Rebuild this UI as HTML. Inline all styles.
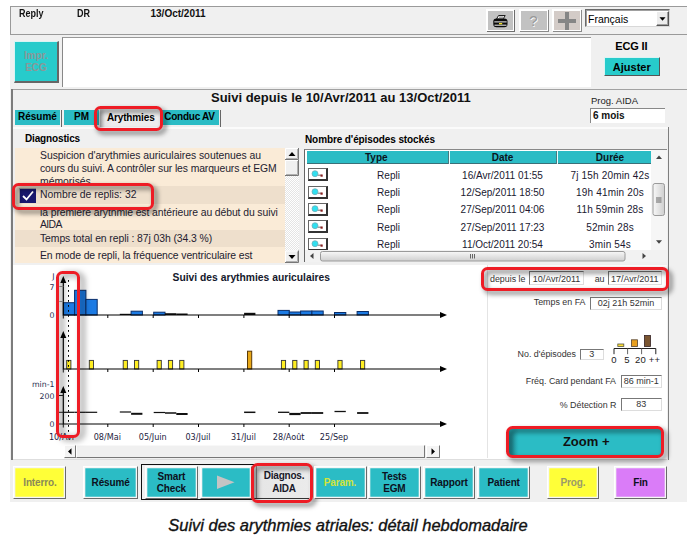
<!DOCTYPE html>
<html><head><meta charset="utf-8"><title>Suivi des arythmies atriales</title>
<style>
html,body{margin:0;padding:0;background:#fff}
#root{position:relative;width:698px;height:545px;overflow:hidden;background:#fff;font-family:"Liberation Sans",sans-serif;font-size:10px;color:#111}
#root div,#root span{position:absolute;box-sizing:border-box;white-space:nowrap}
#root svg{position:absolute}
.b{font-weight:bold}
.btn{background:#2bbcc5;border-top:1px solid #d8f4f4;border-left:1px solid #d8f4f4;border-right:1px solid #555;border-bottom:1px solid #555;font-weight:bold;text-align:center;color:#101020}
.btn span{left:0;right:0;text-align:center}
.fld{background:#fff;border-top:1px solid #777;border-left:1px solid #777;border-right:1px solid #ddd;border-bottom:1px solid #ddd;text-align:center;font-size:9px;color:#333}
.lbl{font-size:9px;color:#333;text-align:right}
.red{border:3px solid #ee1c25;border-radius:6.500px;filter:drop-shadow(3px 3px 2.500px rgba(0,0,0,.6))}
.tab{background:#2bbcc5;font-weight:bold;text-align:center;line-height:14.500px;font-size:10px;color:#000}
.row{left:0;width:270px}
.row span{left:25px;font-size:10.4px;color:#241c30}
.tr{left:0;width:347px;height:17px;font-size:10px;color:#201830}
.tr span{text-align:center;line-height:17px}
.ic{left:3px;top:1.500px;width:19.500px;height:13px;background:#fff;border:1px solid #666;border-right:2px solid #333;border-bottom:2px solid #333}
.bb{border:1px solid;border-color:#fff #6a6a6a #6a6a6a #fff;box-shadow:inset 0 0 0 1.300px #f6f6f6;font-weight:bold;text-align:center;font-size:10px;letter-spacing:-.15px;line-height:12px}
.bb span{left:0;right:0;text-align:center}
.tb{border:1px solid #fff;border-right-color:#666;border-bottom-color:#666}
</style></head><body>
<div id="root">

<div style="left:10px;top:6px;width:677px;height:496px;background:#f0f0f0"></div>
<div style="left:10px;top:6px;width:677px;height:29px;border:1px solid #9a9a9a;border-right:none"></div>
<span class="b" style="left:18.500px;top:8px;transform:scaleX(.9);transform-origin:0 0">Reply</span>
<span class="b" style="left:76.500px;top:8px;transform:scaleX(.9);transform-origin:0 0">DR</span>
<span class="b" style="left:150.500px;top:8px">13/Oct/2011</span>
<div style="left:485.800px;top:9px;width:28.200px;height:22.200px;background:#c2c2c2;border:2.300px solid #fff;border-right-width:1.300px;border-bottom-width:1.300px;box-shadow:1px 1px 0 #6e6e6e"></div>
<svg style="left:493px;top:14.800px" width="15" height="13" viewBox="0 0 15 13"><rect x=".3" y="3.400" width="14.200" height="8.800" rx="3.200" fill="#0a0a0a"/><path d="M5.600 .5h6.600l-1.900 3.300h-6.700z" fill="#fff" stroke="#0a0a0a" stroke-width=".9"/><path d="M6 2.100h4.500" stroke="#333" stroke-width=".7"/><path d="M1.300 6.900h12.400M1.500 10.200h12" stroke="#f4f4f4" stroke-width="1"/><rect x="6" y="8" width="3.200" height="1.300" fill="#f0e020"/></svg>
<div style="left:518.600px;top:9px;width:29.200px;height:22.200px;background:#c2c2c2;border:2.300px solid #fff;border-right-width:1.300px;border-bottom-width:1.300px;box-shadow:1px 1px 0 #8a8a8a"></div>
<span style="left:518.800px;top:12.500px;width:29px;text-align:center;font-size:15px;line-height:16px;color:#989898;text-shadow:.8px .8px 0 #fafafa">?</span>
<div style="left:552px;top:9px;width:29.300px;height:22.200px;background:#d3cbc7;border:2.300px solid #fff;border-right-width:1.300px;border-bottom-width:1.300px;box-shadow:1px 1px 0 #8a8a8a"></div>
<div style="left:558.200px;top:18.600px;width:17.800px;height:4px;background:#868686"></div>
<div style="left:565px;top:11.700px;width:4.400px;height:18px;background:#868686"></div>
<div style="left:584.800px;top:9.300px;width:85.200px;height:18.200px;background:#fff;border:1px solid #6a6a6a;border-right-color:#d8d8d8;border-bottom-color:#d8d8d8;box-shadow:inset 1px 1px 0 #a0a0a0"></div>
<span style="left:588px;top:12.500px;font-size:10.500px;color:#000">Français</span>
<div class="tb" style="left:656px;top:11.300px;width:13px;height:15.200px;background:#ececec;border-right-color:#555;border-bottom-color:#555;box-shadow:inset -1px -1px 0 #a0a0a0"></div>
<svg style="left:656px;top:11.300px" width="14" height="16"><path d="M3.500 6.200h6l-3 3.500z" fill="#000"/></svg>
<div class="btn" style="left:14px;top:40.800px;width:45px;height:42.500px;background:#27cbcb;border-right:2px solid #666;border-bottom:2px solid #666;color:#8a9898;font-size:10px;line-height:12px;padding-top:8px">Impr.<br>ECG</div>
<div style="left:62px;top:37px;width:528.500px;height:50px;background:#fff;border-top:1px solid #999;border-left:1px solid #888"></div>
<span class="b" style="left:601.300px;top:39.800px;width:60px;text-align:center;font-size:11px;letter-spacing:-.15px;color:#000">ECG II</span>
<div class="btn" style="left:603.500px;top:56.600px;width:56.500px;height:19.800px;background:#27cbcb;font-size:11px;line-height:18.500px;color:#000">Ajuster</div>
<div style="left:11px;top:88.500px;width:676px;height:1.500px;background:#a2a2a2"></div>
<div style="left:10.500px;top:89px;width:2px;height:371px;background:#7c7c7c"></div>
<span class="b" style="left:211px;top:90px;font-size:13px;color:#111">Suivi depuis le 10/Avr/2011 au 13/Oct/2011</span>
<span style="left:591px;top:95px;font-size:9.5px;color:#222">Prog. AIDA</span>
<div style="left:590px;top:108px;width:75px;height:15px;background:#fff;border-top:1px solid #888;border-left:1px solid #888"></div>
<span class="b" style="left:593px;top:110px;font-size:10px">6 mois</span>
<div class="tab" style="left:14.800px;top:110px;width:45.200px;height:15px">Résumé</div>
<div style="left:60.700px;top:109.500px;width:1.500px;height:17px;background:#666"></div>
<div class="tab" style="left:63.800px;top:110px;width:35.500px;height:15px">PM</div>
<div class="tab" style="left:99.500px;top:108.500px;width:62.500px;height:19px;background:linear-gradient(90deg,#bdbdbd 0,#e6e6e6 5px,#ededed 12px);line-height:17.500px;letter-spacing:-.13px">Arythmies</div>
<div class="tab" style="left:162px;top:110px;width:57px;height:15px;font-size:10px;letter-spacing:-.25px;padding-right:2px">Conduc AV</div>
<div style="left:219.500px;top:109.500px;width:1.500px;height:17px;background:#666"></div>
<div style="left:13px;top:127px;width:655px;height:1.500px;background:#fbfbfb"></div>
<div style="left:667.600px;top:127px;width:1.800px;height:332.500px;background:#7e7e7e"></div>
<div class="red" style="left:94px;top:106px;width:69px;height:25px"></div>
<span class="b" style="left:25px;top:133px;font-size:10px;letter-spacing:-.15px;color:#000">Diagnostics</span>
<span class="b" style="left:305px;top:133.500px;font-size:10px;letter-spacing:-.1px;color:#000">Nombre d'épisodes stockés</span>
<div id="diag" style="left:15px;top:148px;width:284px;height:115px;overflow:hidden;background:#faebd7">
<div class="row" style="top:0;height:38px;background:#faebd7"><span style="top:2px;letter-spacing:-.02px">Suspicion d'arythmies auriculaires soutenues au</span><span style="top:14.800px;letter-spacing:-.115px">cours du suivi. A contrôler sur les marqueurs et EGM</span><span style="top:27.500px">mémorisés</span></div>
<div class="row" style="top:38px;height:18px;background:#eedfcc"><span style="top:3px">Nombre de replis: 32</span></div>
<div class="row" style="top:56px;height:26px;background:#faebd7"><span style="top:2.500px;letter-spacing:-.092px">la première arythmie est antérieure au début du suivi</span><span style="top:14.700px;letter-spacing:-.6px">AIDA</span></div>
<div class="row" style="top:82px;height:16.500px;background:#eedfcc"><span style="top:3px;letter-spacing:-.074px">Temps total en repli : 87j 03h (34.3 %)</span></div>
<div class="row" style="top:98.500px;height:30px;background:#faebd7"><span style="top:3.700px;letter-spacing:-.1px">En mode de repli, la fréquence ventriculaire est</span></div>
<div style="left:270px;top:0;width:14px;height:115px;background:#f4f4f4"><svg style="left:0;top:0" width="14" height="115"><defs><pattern id="dot" width="2" height="2" patternUnits="userSpaceOnUse"><rect width="2" height="2" fill="#fff"/><rect width="1" height="1" fill="#e4e4e4"/><rect x="1" y="1" width="1" height="1" fill="#e4e4e4"/></pattern></defs><rect width="14" height="115" fill="url(#dot)"/><g id="sbb"><rect width="14" height="12" fill="#f0f0f0"/><path d="M.5 12V.5H14" stroke="#fff" fill="none"/><path d="M13.500 0V11.500H0" stroke="#777" fill="none"/><path d="M12.500 1V10.500H1" stroke="#b0b0b0" fill="none"/></g><path d="M3.500 8l3.500-4 3.500 4z" fill="#000"/><g transform="translate(0,12)"><rect width="14" height="16" fill="#f0f0f0"/><path d="M.5 16V.5H14" stroke="#fff" fill="none"/><path d="M13.500 0V15.500H0" stroke="#777" fill="none"/><path d="M12.500 1V14.500H1" stroke="#b0b0b0" fill="none"/></g><g transform="translate(0,102.500)"><rect width="14" height="12.500" fill="#f0f0f0"/><path d="M.5 12V.5H14" stroke="#fff" fill="none"/><path d="M13.500 0V12H0" stroke="#777" fill="none"/><path d="M12.500 1V11H1" stroke="#b0b0b0" fill="none"/></g><path d="M3.500 107l3.500 4 3.500-4z" fill="#000"/></svg></div>
</div>
<div id="tbl" style="left:304px;top:148.500px;width:363px;height:113.500px;background:#fff;overflow:hidden;border-left:1px solid #666;border-top:1px solid #888">
<div style="left:1.5px;top:1.2px;width:344.5px;height:13.200px;background:#2bbcc5;border-bottom:1px solid #3a7078"></div>
<div style="left:143px;top:1.2px;width:1px;height:13px;background:#4a7a80"></div>
<div style="left:144px;top:1.2px;width:1px;height:13px;background:#e8ffff"></div>
<div style="left:251px;top:1.2px;width:1px;height:13px;background:#4a7a80"></div>
<div style="left:252px;top:1.2px;width:1px;height:13px;background:#e8ffff"></div>
<span class="b" style="left:11.300000000000011px;top:1.2px;width:120px;text-align:center;line-height:14px;font-size:10px;color:#0a1420">Type</span>
<span class="b" style="left:137.5px;top:1.2px;width:120px;text-align:center;line-height:14px;font-size:10px;color:#0a1420">Date</span>
<span class="b" style="left:245px;top:1.2px;width:120px;text-align:center;line-height:14px;font-size:10px;color:#0a1420">Durée</span>
<div class="tr" style="top:17.1px"><div class="ic"><svg width="16" height="11" viewBox="0 0 16 11" style="left:0;top:0"><circle cx="6" cy="4.700" r="3" fill="#30e0f0" stroke="#70a8b0" stroke-width=".7"/><path d="M9 6.200h3.500" stroke="#888" stroke-width="1.200" fill="none"/><rect x="11.500" y="5.500" width="2.200" height="2.200" fill="#8a2020"/></svg></div><span style="left:23.5px;width:120px">Repli</span><span style="left:137.5px;width:120px">16/Avr/2011 01:55</span><span style="left:245px;width:120px;letter-spacing:.17px">7j 15h 20min 42s</span></div>
<div class="tr" style="top:34.5px"><div class="ic"><svg width="16" height="11" viewBox="0 0 16 11" style="left:0;top:0"><circle cx="6" cy="4.700" r="3" fill="#30e0f0" stroke="#70a8b0" stroke-width=".7"/><path d="M9 6.200h3.500" stroke="#888" stroke-width="1.200" fill="none"/><rect x="11.500" y="5.500" width="2.200" height="2.200" fill="#8a2020"/></svg></div><span style="left:23.5px;width:120px">Repli</span><span style="left:137.5px;width:120px">12/Sep/2011 18:50</span><span style="left:245px;width:120px;letter-spacing:.17px">19h 41min 20s</span></div>
<div class="tr" style="top:51.9px"><div class="ic"><svg width="16" height="11" viewBox="0 0 16 11" style="left:0;top:0"><circle cx="6" cy="4.700" r="3" fill="#30e0f0" stroke="#70a8b0" stroke-width=".7"/><path d="M9 6.200h3.500" stroke="#888" stroke-width="1.200" fill="none"/><rect x="11.500" y="5.500" width="2.200" height="2.200" fill="#8a2020"/></svg></div><span style="left:23.5px;width:120px">Repli</span><span style="left:137.5px;width:120px">27/Sep/2011 04:06</span><span style="left:245px;width:120px;letter-spacing:.17px">11h 59min 28s</span></div>
<div class="tr" style="top:69.3px"><div class="ic"><svg width="16" height="11" viewBox="0 0 16 11" style="left:0;top:0"><circle cx="6" cy="4.700" r="3" fill="#30e0f0" stroke="#70a8b0" stroke-width=".7"/><path d="M9 6.200h3.500" stroke="#888" stroke-width="1.200" fill="none"/><rect x="11.500" y="5.500" width="2.200" height="2.200" fill="#8a2020"/></svg></div><span style="left:23.5px;width:120px">Repli</span><span style="left:137.5px;width:120px">27/Sep/2011 17:23</span><span style="left:245px;width:120px;letter-spacing:.17px">52min 28s</span></div>
<div class="tr" style="top:86.7px"><div class="ic"><svg width="16" height="11" viewBox="0 0 16 11" style="left:0;top:0"><circle cx="6" cy="4.700" r="3" fill="#30e0f0" stroke="#70a8b0" stroke-width=".7"/><path d="M9 6.200h3.500" stroke="#888" stroke-width="1.200" fill="none"/><rect x="11.500" y="5.500" width="2.200" height="2.200" fill="#8a2020"/></svg></div><span style="left:23.5px;width:120px">Repli</span><span style="left:137.5px;width:120px">11/Oct/2011 20:54</span><span style="left:245px;width:120px;letter-spacing:.17px">3min 54s</span></div>
<div style="left:346px;top:0;width:16px;height:100.0px;background:#f6f6f6"></div>
<svg style="left:346px;top:0" width="16" height="100"><defs><linearGradient id="gv" x1="0" x2="1" y1="0" y2="0"><stop offset="0" stop-color="#f8f8f8"/><stop offset="1" stop-color="#cfcfcf"/></linearGradient><linearGradient id="gh" x1="0" x2="0" y1="0" y2="1"><stop offset="0" stop-color="#f8f8f8"/><stop offset="1" stop-color="#cfcfcf"/></linearGradient></defs><path d="M5 9.0l3-3.500 3 3.500z" fill="#444"/><path d="M5 90.19999999999999l3 3.500 3-3.500z" fill="#444"/><rect x="2" y="33.5" width="11.500" height="32" rx="2" fill="url(#gv)" stroke="#9a9a9a"/><path d="M5 48.0h5.500M5 50.0h5.500M5 52.0h5.500" stroke="#666" stroke-width="1"/></svg>
<div style="left:0;top:100.0px;width:363px;height:12.500px;background:#f2f2f2"></div>
<svg style="left:0;top:100.0px" width="363" height="13"><path d="M8.5 3l-3.500 3 3.500 3z" fill="#444"/><path d="M337.5 3l3.500 3-3.500 3z" fill="#444"/><rect x="15.5" y="1.500" width="304.5" height="9.500" rx="2" fill="url(#gh)" stroke="#9a9a9a"/><path d="M165.5 4v4.500M167.5 4v4.500M169.5 4v4.500" stroke="#666" stroke-width="1"/></svg>
</div>
<div style="left:13px;top:265px;width:654px;height:194px;background:#fff"></div>
<div style="left:13px;top:458.500px;width:654px;height:1px;background:#dedede"></div>
<div style="left:487px;top:265px;width:1px;height:193px;background:#e4e4e4"></div>
<svg id="chart" style="left:0;top:0" width="698" height="545" viewBox="0 0 698 545" font-family="'DejaVu Sans','Liberation Sans',sans-serif" font-size="8" fill="#2a3050"><rect x="63.3" y="302.7" width="11.30" height="12.3" fill="#1c7be4" stroke="#0b2f6a" stroke-width="1"/><rect x="74.6" y="290.3" width="11.30" height="24.7" fill="#1c7be4" stroke="#0b2f6a" stroke-width="1"/><rect x="85.9" y="299.4" width="11.30" height="15.6" fill="#1c7be4" stroke="#0b2f6a" stroke-width="1"/><rect x="131.1" y="311.2" width="11.30" height="3.8" fill="#1c7be4" stroke="#0b2f6a" stroke-width="1"/><rect x="153.7" y="312.2" width="11.30" height="2.8" fill="#1c7be4" stroke="#0b2f6a" stroke-width="1"/><rect x="278.0" y="310.4" width="11.30" height="4.6" fill="#1c7be4" stroke="#0b2f6a" stroke-width="1"/><rect x="289.3" y="312.0" width="11.30" height="3.0" fill="#1c7be4" stroke="#0b2f6a" stroke-width="1"/><rect x="300.6" y="311.0" width="11.30" height="4.0" fill="#1c7be4" stroke="#0b2f6a" stroke-width="1"/><rect x="311.9" y="311.0" width="11.30" height="4.0" fill="#1c7be4" stroke="#0b2f6a" stroke-width="1"/><rect x="334.5" y="312.5" width="11.30" height="2.5" fill="#1c7be4" stroke="#0b2f6a" stroke-width="1"/><rect x="357.1" y="311.5" width="11.30" height="3.5" fill="#1c7be4" stroke="#0b2f6a" stroke-width="1"/><rect x="119.8" y="313.8" width="11.30" height="1.2" fill="#111"/><rect x="165.0" y="313.2" width="11.30" height="1.8" fill="#111"/><rect x="176.3" y="313.5" width="11.30" height="1.5" fill="#111"/><rect x="244.1" y="312.8" width="11.30" height="2.2" fill="#111"/><rect x="66.7" y="360.4" width="4.2" height="8.6" fill="#ffee22" stroke="#333" stroke-width=".9"/><rect x="89.3" y="360.4" width="4.2" height="8.6" fill="#ffee22" stroke="#333" stroke-width=".9"/><rect x="123.2" y="360.4" width="4.2" height="8.6" fill="#ffee22" stroke="#333" stroke-width=".9"/><rect x="134.5" y="360.4" width="4.2" height="8.6" fill="#ffee22" stroke="#333" stroke-width=".9"/><rect x="157.1" y="360.4" width="4.2" height="8.6" fill="#ffee22" stroke="#333" stroke-width=".9"/><rect x="168.4" y="360.4" width="4.2" height="8.6" fill="#ffee22" stroke="#333" stroke-width=".9"/><rect x="179.7" y="360.4" width="4.2" height="8.6" fill="#ffee22" stroke="#333" stroke-width=".9"/><rect x="281.4" y="360.4" width="4.2" height="8.6" fill="#ffee22" stroke="#333" stroke-width=".9"/><rect x="292.7" y="360.4" width="4.2" height="8.6" fill="#ffee22" stroke="#333" stroke-width=".9"/><rect x="304.0" y="360.4" width="4.2" height="8.6" fill="#ffee22" stroke="#333" stroke-width=".9"/><rect x="315.3" y="360.4" width="4.2" height="8.6" fill="#ffee22" stroke="#333" stroke-width=".9"/><rect x="337.9" y="360.4" width="4.2" height="8.6" fill="#ffee22" stroke="#333" stroke-width=".9"/><rect x="360.5" y="360.4" width="4.2" height="8.6" fill="#ffee22" stroke="#333" stroke-width=".9"/><rect x="247.5" y="351.2" width="4.2" height="17.800" fill="#e8a818" stroke="#5a3a08" stroke-width="1"/><rect x="63.3" y="411.70" width="11.30" height="1.2" fill="#111"/><rect x="74.6" y="411.70" width="11.30" height="1.2" fill="#111"/><rect x="85.9" y="411.70" width="11.30" height="1.2" fill="#111"/><rect x="119.8" y="411.40" width="11.30" height="1.2" fill="#111"/><rect x="131.1" y="412.80" width="11.30" height="2" fill="#111"/><rect x="153.7" y="411.90" width="11.30" height="1.2" fill="#111"/><rect x="165.0" y="412.25" width="11.30" height="1.5" fill="#111"/><rect x="176.3" y="413.00" width="11.30" height="2" fill="#111"/><rect x="244.1" y="411.55" width="11.30" height="1.5" fill="#111"/><rect x="278.0" y="411.65" width="11.30" height="1.3" fill="#111"/><rect x="289.3" y="412.90" width="11.30" height="2.2" fill="#111"/><rect x="300.6" y="412.10" width="11.30" height="1.8" fill="#111"/><rect x="311.9" y="412.10" width="11.30" height="1.8" fill="#111"/><rect x="334.5" y="410.85" width="11.30" height="1.3" fill="#111"/><rect x="357.1" y="412.10" width="11.30" height="1.8" fill="#111"/><path d="M63.3 280V315H442" stroke="#000" stroke-width="1.2" fill="none"/><path d="M60.3 283L63.3 276L66.3 283z" fill="#000"/><path d="M440 312L447 315L440 318z" fill="#000"/><path d="M107.8 315v3" stroke="#000" stroke-width="1"/><path d="M153.2 315v3" stroke="#000" stroke-width="1"/><path d="M198.5 315v3" stroke="#000" stroke-width="1"/><path d="M243.9 315v3" stroke="#000" stroke-width="1"/><path d="M289.2 315v3" stroke="#000" stroke-width="1"/><path d="M334.5 315v3" stroke="#000" stroke-width="1"/><path d="M63.3 335V369H442" stroke="#000" stroke-width="1.2" fill="none"/><path d="M60.3 338L63.3 331L66.3 338z" fill="#000"/><path d="M440 366L447 369L440 372z" fill="#000"/><path d="M107.8 369v3" stroke="#000" stroke-width="1"/><path d="M153.2 369v3" stroke="#000" stroke-width="1"/><path d="M198.5 369v3" stroke="#000" stroke-width="1"/><path d="M243.9 369v3" stroke="#000" stroke-width="1"/><path d="M289.2 369v3" stroke="#000" stroke-width="1"/><path d="M334.5 369v3" stroke="#000" stroke-width="1"/><path d="M63.3 390V424H442" stroke="#000" stroke-width="1.2" fill="none"/><path d="M60.3 393L63.3 386L66.3 393z" fill="#000"/><path d="M440 421L447 424L440 427z" fill="#000"/><path d="M107.8 424v3" stroke="#000" stroke-width="1"/><path d="M153.2 424v3" stroke="#000" stroke-width="1"/><path d="M198.5 424v3" stroke="#000" stroke-width="1"/><path d="M243.9 424v3" stroke="#000" stroke-width="1"/><path d="M289.2 424v3" stroke="#000" stroke-width="1"/><path d="M334.5 424v3" stroke="#000" stroke-width="1"/><path d="M68.5 280V434" stroke="#000" stroke-width="1" stroke-dasharray="1.800 3.200" fill="none"/><path d="M58.8 395.500h4.500M58.8 412.300h4.500M58.8 424h4.500M63.3 424v3.500M63.3 369v3.500M63.3 315v3.500" stroke="#222" stroke-width="1"/><path d="M59.3 286.5h4M59.3 301.5h4" stroke="#9a9a9a" stroke-width="1"/><text x="54.5" y="278.5" text-anchor="end" font-size="7.800">J</text><text x="54.5" y="289.8" text-anchor="end" font-size="7.800">7</text><text x="54.5" y="318" text-anchor="end" font-size="7.800">0</text><text x="54.5" y="387" text-anchor="end" font-size="7.800">min-1</text><text x="54.5" y="398.5" text-anchor="end" font-size="7.800">200</text><text x="54.5" y="427" text-anchor="end" font-size="7.800">0</text><text x="62.0" y="439.5" text-anchor="middle" font-size="8.100" fill="#1c2240">10/Avr</text><text x="107.3" y="439.5" text-anchor="middle" font-size="8.100" fill="#1c2240">08/Mai</text><text x="152.7" y="439.5" text-anchor="middle" font-size="8.100" fill="#1c2240">05/Juin</text><text x="198.0" y="439.5" text-anchor="middle" font-size="8.100" fill="#1c2240">03/Juil</text><text x="243.4" y="439.5" text-anchor="middle" font-size="8.100" fill="#1c2240">31/Juil</text><text x="288.7" y="439.5" text-anchor="middle" font-size="8.100" fill="#1c2240">28/Août</text><text x="334.0" y="439.5" text-anchor="middle" font-size="8.100" fill="#1c2240">25/Sep</text><text x="251.3" y="280.5" text-anchor="middle" font-weight="bold" font-family="'Liberation Sans',sans-serif" font-size="10.300" fill="#14182c">Suivi des arythmies auriculaires</text><path d="M614 354.200V348.500H655.800V354.200" stroke="#222" stroke-width="1" fill="none"/><path d="M627.600 348.500V354.200M641.600 348.500V354.200" stroke="#666" stroke-width="1" fill="none"/><rect x="617.800" y="344" width="6" height="2.500" fill="#ffe033" stroke="#554" stroke-width=".8"/><rect x="631.500" y="339.800" width="6" height="6.700" fill="#e8a020" stroke="#543" stroke-width=".8"/><rect x="644.500" y="335.500" width="6" height="11" fill="#7a5530" stroke="#322" stroke-width=".8"/><text x="614" y="363.300" text-anchor="middle" font-family="'Liberation Sans',sans-serif" font-size="9.500" fill="#222">0</text><text x="627" y="363.300" text-anchor="middle" font-family="'Liberation Sans',sans-serif" font-size="9.500" fill="#222">5</text><text x="640.4" y="363.300" text-anchor="middle" font-family="'Liberation Sans',sans-serif" font-size="9.500" fill="#222">20</text><text x="654.4" y="363.300" text-anchor="middle" font-family="'Liberation Sans',sans-serif" font-size="9.500" fill="#222">++</text></svg>
<div style="left:64px;top:445px;width:376px;height:13.500px;background:#f0f0f0"></div><div class="tb" style="left:64px;top:445px;width:12px;height:13px;background:#f4f4f4;border-right-color:#777;border-bottom-color:#777"></div><div class="tb" style="left:76px;top:445px;width:348.500px;height:13px;background:#f0f0f0;border-top-color:#f8f8f8;border-right-color:#777;border-bottom-color:#777"></div><div class="tb" style="left:426px;top:445px;width:14px;height:13px;background:#f4f4f4;border-right-color:#777;border-bottom-color:#777"></div><svg style="left:64px;top:445px" width="377" height="13"><path d="M7.500 3.200l-3.500 3.300 3.500 3.300z" fill="#000"/><path d="M367.500 3.200l3.500 3.300-3.500 3.300z" fill="#000"/></svg>
<span class="lbl" style="left:325.5px;width:200px;top:272.5px;line-height:12px;font-size:8.9px">depuis le</span>
<div class="fld" style="left:529px;top:271px;width:55px;height:13.5px;line-height:14.6px">10/Avr/2011</div>
<span class="lbl" style="left:404.5px;width:200px;top:272.5px;line-height:12px;font-size:8.9px">au</span>
<div class="fld" style="left:607.5px;top:271px;width:54.5px;height:13.5px;line-height:14.6px">17/Avr/2011</div>
<span class="lbl" style="left:385.5px;width:200px;top:295.5px;line-height:12px;font-size:8.9px">Temps en FA</span>
<div class="fld" style="left:590px;top:296.5px;width:72px;height:13px;line-height:10.6px">02j 21h 52min</div>
<span class="lbl" style="left:376px;width:200px;top:348px;line-height:12px;font-size:8.9px">No. d'épisodes</span>
<div class="fld" style="left:580px;top:348.5px;width:23.5px;height:11.5px;line-height:9.5px">3</div>
<span class="lbl" style="left:416px;width:200px;top:375px;line-height:12px;font-size:8.9px">Fréq. Card pendant FA</span>
<div class="fld" style="left:620.5px;top:375px;width:41.5px;height:12.5px;line-height:10.5px">86 min-1</div>
<span class="lbl" style="left:416.5px;width:200px;top:399px;line-height:12px;font-size:8.9px">% Détection R</span>
<div class="fld" style="left:620.5px;top:398px;width:41.5px;height:12.5px;line-height:10.5px">83</div>
<div class="red" style="left:481px;top:267px;width:188.200px;height:24.400px"></div>
<div style="left:507px;top:428.500px;width:156px;height:27px;background:linear-gradient(90deg,#1f8a92 0,#2bbcc5 12px,#2bbcc5 100%);border-radius:3px"></div>
<span class="b" style="left:508.200px;top:434px;width:156px;text-align:center;font-size:13px;color:#111">Zoom +</span>
<div class="red" style="left:505.700px;top:426.300px;width:158.500px;height:31.700px"></div>
<div class="red" style="left:56px;top:270.800px;width:23.800px;height:167.700px;filter:drop-shadow(4px 2px 3px rgba(0,0,0,.55))"></div>
<div style="left:19px;top:188px;width:17px;height:15px;background:#18186e;border-top:1px solid #aaa;border-left:1px solid #aaa"></div>
<svg style="left:20px;top:189px" width="16" height="14"><path d="M3 7l3.500 3.500 6.500-8" stroke="#fff" stroke-width="1.800" fill="none"/></svg>
<div class="red" style="left:12px;top:182.500px;width:141.500px;height:27px"></div>
<div class="bb" style="left:13.3px;top:466px;width:53.2px;height:32.800px;background:#ffff38;color:#8a8a58;padding-left:0px"><span style="top:10px">Interro.</span></div>
<div class="bb" style="left:83px;top:466px;width:55.2px;height:32.800px;background:#2bbcc5;color:#0c1020;padding-left:0px"><span style="top:10px">Résumé</span></div>
<div style="left:141px;top:463.800px;width:115px;height:36.200px;border:1px solid #111;border-right:none;background:#f0f0f0"></div>
<div class="bb" style="left:144.5px;top:466px;width:53.8px;height:32.800px;background:#2bbcc5;color:#0c1020;padding-left:0px"><span style="top:3.800px">Smart</span><span style="top:15.600px">Check</span></div>
<div class="bb" style="left:199.8px;top:466px;width:52.2px;height:32.800px;background:#2bbcc5;color:#0c1020;padding-left:0px"><span style="top:10px"></span></div>
<svg style="left:201px;top:466px" width="50" height="32"><path d="M16 9.500l17.500 6.700-17.500 6.800z" fill="#c4c4c4"/></svg>
<div style="left:253px;top:465px;width:59px;height:37px;background:#f4f4f4;border-radius:4px"></div>
<div style="left:253px;top:465px;width:56px;height:33.500px;background:linear-gradient(90deg,#c4c4c4 0,#e6e6e6 7px,#ebebeb 100%);border-bottom:1px solid #333;border-top-left-radius:4px"></div>
<div style="left:255.500px;top:466px;width:1px;height:32px;background:#8a8a8a"></div>
<span class="b" style="left:254.500px;top:470.200px;width:59px;text-align:center;line-height:12px;font-size:10px;letter-spacing:-.2px;color:#181828">Diagnos.</span><span class="b" style="left:254.500px;top:482.800px;width:59px;text-align:center;line-height:12px;font-size:10px;letter-spacing:-.2px;color:#181828">AIDA</span>
<div class="red" style="left:251px;top:463px;width:62.200px;height:40px"></div>
<div class="bb" style="left:313.5px;top:466px;width:53.0px;height:32.800px;background:#2bbcc5;color:#d4e43c;padding-left:0px"><span style="top:10px">Param.</span></div>
<div class="bb" style="left:368px;top:466px;width:52.8px;height:32.800px;background:#2bbcc5;color:#0c1020;padding-left:0px"><span style="top:3.800px">Tests</span><span style="top:15.600px">EGM</span></div>
<div class="bb" style="left:422.6px;top:466px;width:52.7px;height:32.800px;background:#2bbcc5;color:#0c1020;padding-left:0px"><span style="top:10px">Rapport</span></div>
<div class="bb" style="left:477px;top:466px;width:53.3px;height:32.800px;background:#2bbcc5;color:#0c1020;padding-left:0px"><span style="top:10px">Patient</span></div>
<div class="bb" style="left:546.7px;top:466px;width:52.5px;height:32.800px;background:#ffff38;color:#9a9a6a;padding-left:0px"><span style="top:10px">Prog.</span></div>
<div class="bb" style="left:614.3px;top:466px;width:52.5px;height:32.800px;background:#da7cf8;color:#0c1020;padding-left:0px"><span style="top:10px">Fin</span></div>
<span style="left:0;top:515.500px;width:696px;text-align:center;font-style:italic;font-size:16.5px;color:#111;-webkit-text-stroke:.35px #111">Suivi des arythmies atriales: détail hebdomadaire</span>

</div>
</body></html>
